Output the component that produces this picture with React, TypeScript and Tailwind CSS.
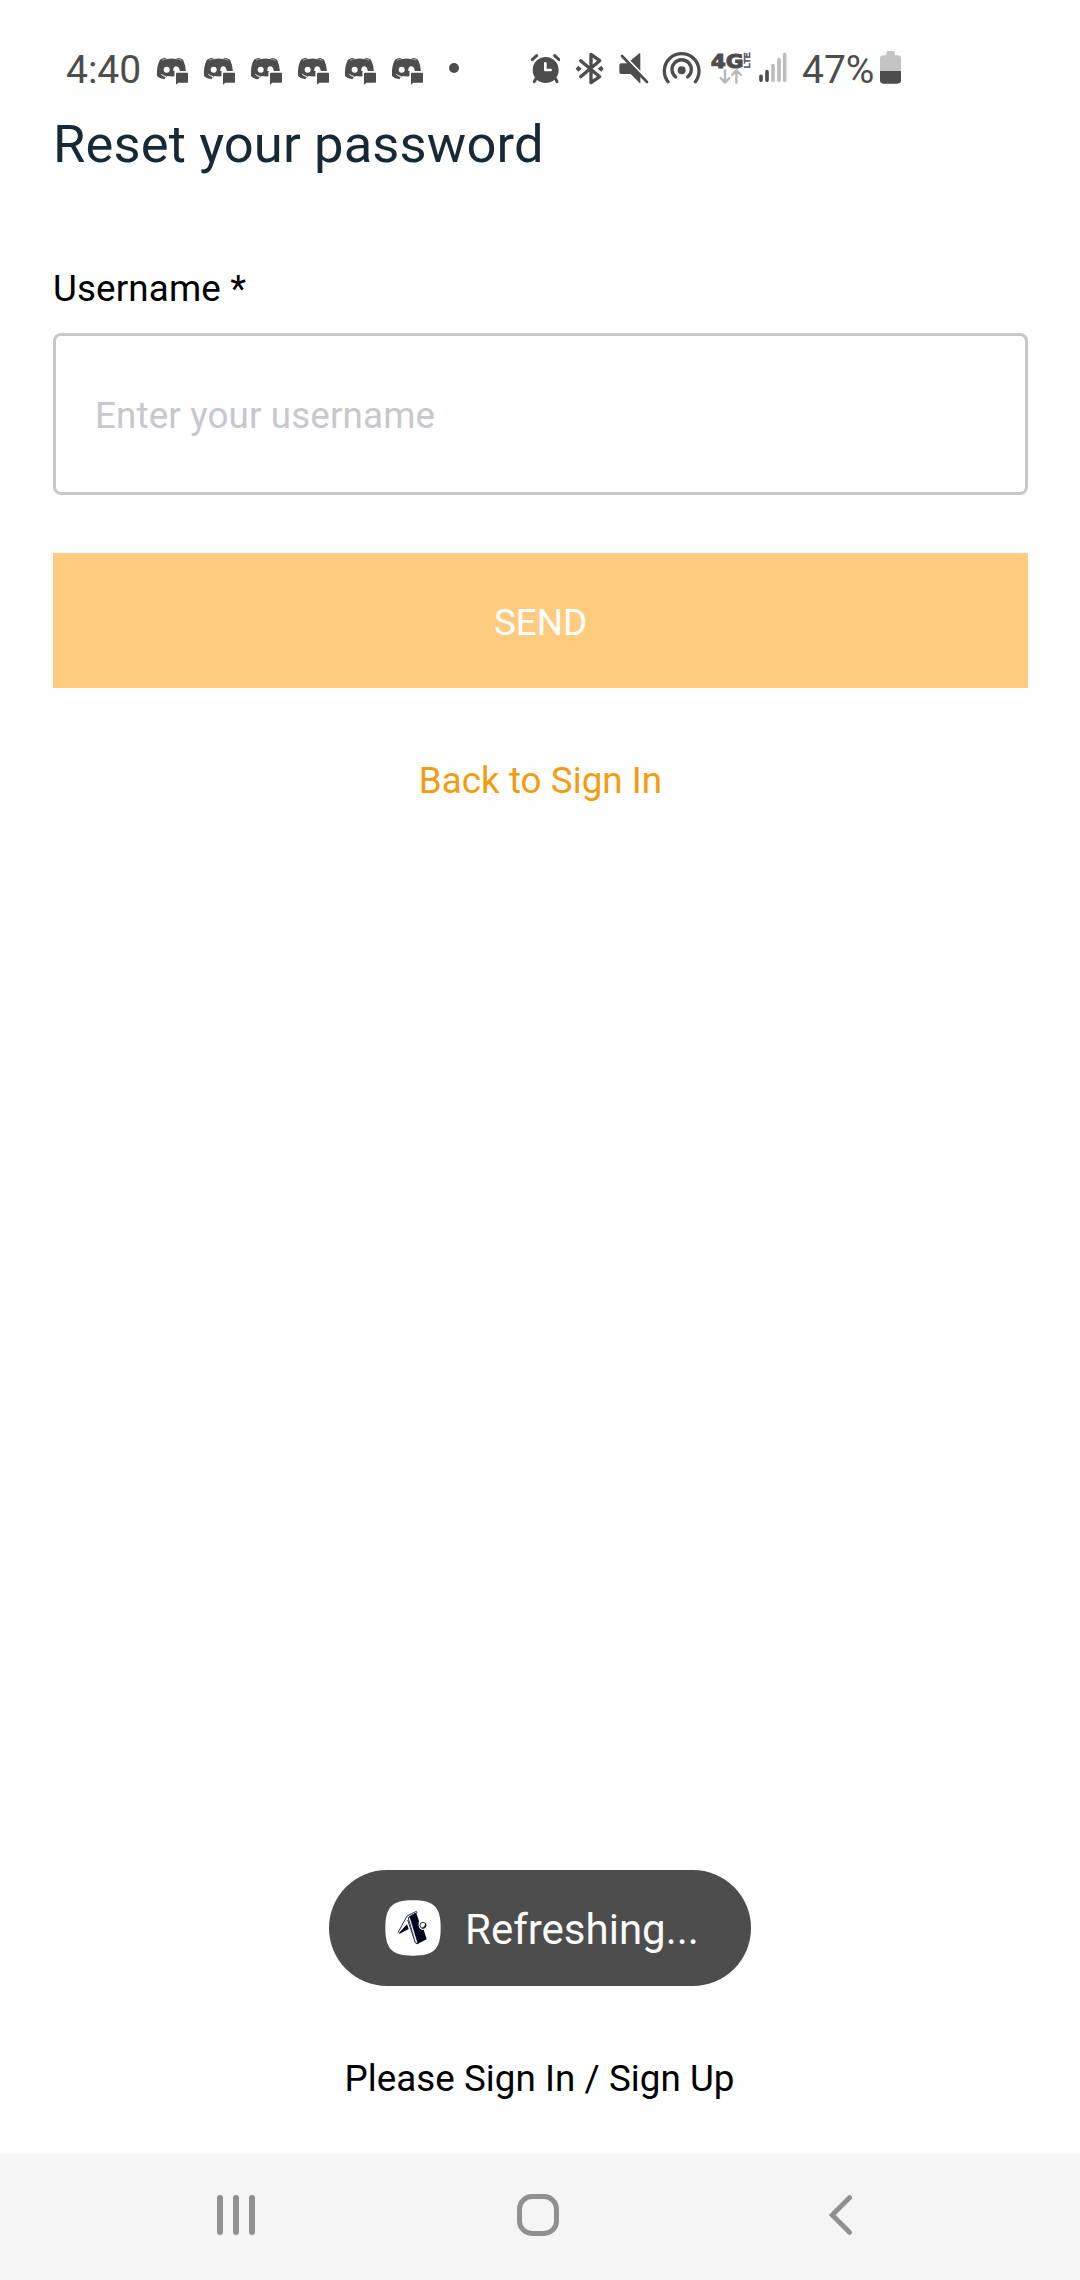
import React from "react";

const INK = "#4d4d4d";

// Status glyphs share a 40px tall box drawn on a grid of three units per pixel.
function Glyph({ x, w, className, children }: { x: number; w: number; className?: string; children: React.ReactNode }) {
  return (
    <svg className={className} width={w / 3} height={40} viewBox={`${x} 30 ${w} 120`} fill={INK} style={{ flexShrink: 0 }}>
      {children}
    </svg>
  );
}

function DiscordIcon() {
  return (
    <Glyph x={348} w={99}>
      <path d="M375 53 L382 57 Q395 54 407 57 L414 53 Q422 54 429 59 Q437 74 438 95 L404 95 L404 109 Q393 110 383 108 L378 112 Q365 106 364 102 Q368 108 377 112 L373 118 Q358 116 351 108 Q349 78 360 59 Q367 54 375 53Z" />
      <path d="M366 61 Q374 56 383 56 M406 56 Q415 56 424 61" fill="none" stroke="#fff" strokeWidth="1.5" />
      <path d="M364 103 Q369 108 379 110" fill="none" stroke="#fff" strokeWidth="3" />
      <circle cx="380" cy="89" r="9" fill="#fff" />
      <path d="M400 93 Q399 80 408 79 Q417 80 418 88 L420 94Z" fill="#fff" />
      <path d="M404 93 H447 V132 H404Z" fill="#fff" />
      <path d="M411 98 H442 Q444 98 444 100 V126 Q444 128 442 128 H415 L408 134 V101 Q408 98 411 98Z" />
    </Glyph>
  );
}

function AlarmIcon() {
  return (
    <Glyph x={60} w={90} className="ml-[70px]">
      <circle cx="107" cy="90" r="39" />
      <path d="M67 59 L80 47 M147 59 L134 47 M77 117 L73 125 M137 117 L141 125" stroke={INK} strokeWidth="9" strokeLinecap="round" />
      <path d="M106 70 V90 H122" fill="none" stroke="#fff" strokeWidth="8" strokeLinecap="round" strokeLinejoin="round" />
    </Glyph>
  );
}

function BluetoothIcon() {
  return (
    <Glyph x={195} w={90} className="ml-[15px]">
      <path d="M212 62 L269 110 L243 128 V43 L269 62 L212 110" fill="none" stroke={INK} strokeWidth="10" strokeLinecap="round" strokeLinejoin="round" />
      <path d="M197 86 L205 77 L215 86 L205 95Z M281 86 L274 77 L263 86 L274 95Z" />
    </Glyph>
  );
}

function MuteIcon() {
  return (
    <Glyph x={324} w={93} className="ml-[13px]">
      <path d="M333 70 H358 L391 104 V131 L362 102 H333 Q328 102 328 97 V75 Q328 70 333 70Z" />
      <path d="M388 40 Q391 38 391 42 V92 L361 62Z" />
      <path d="M340 45 L415 123" stroke="#fff" strokeWidth="6" />
      <path d="M336 48 L411 126" stroke={INK} strokeWidth="8" strokeLinecap="round" />
    </Glyph>
  );
}

function HotspotIcon() {
  return (
    <Glyph x={456} w={117} className="ml-[13px]">
      <circle cx="515" cy="91" r="12" />
      <g fill="none" stroke={INK} strokeWidth="10" strokeLinecap="round">
        <path d="M474 125 A52 52 0 1 1 556 125" />
        <path d="M497 111 A29 29 0 1 1 533 111" />
      </g>
    </Glyph>
  );
}

function LteIcon() {
  return (
    <Glyph x={33} w={123} className="ml-[10px]">
      <text x="32" y="83" fontFamily="DejaVu Sans" fontWeight="700" fontSize="59" stroke={INK} strokeWidth="3" textLength="99" lengthAdjust="spacingAndGlyphs">4G</text>
      <text transform="translate(151 85) rotate(-90)" fontFamily="Liberation Sans" fontWeight="700" fontSize="26" stroke={INK} strokeWidth="1" textLength="48" lengthAdjust="spacingAndGlyphs">LTE</text>
      <path d="M75 91 V127 M62 114 L75 128 L88 114 M109 128 V92 M96 105 L109 91 L123 105" fill="none" stroke="#b8b8b8" strokeWidth="7" strokeLinecap="round" strokeLinejoin="round" />
    </Glyph>
  );
}

function SignalIcon() {
  return (
    <Glyph x={174} w={90} className="ml-[6px]">
      <g strokeWidth="11" strokeLinecap="round">
        <path d="M183 109 V121 M201 95 V121" stroke={INK} />
        <path d="M219 77 V121 M237 59 V121 M254 44 V121" stroke="#bdbdbd" />
      </g>
    </Glyph>
  );
}

function BatteryIcon() {
  return (
    <Glyph x={537} w={69} className="ml-[5px]">
      <path d="M559 46 V40 Q559 33 565 33 H579 Q585 33 585 40 V46 H593 Q603 46 603 56 V94 H540 V56 Q540 46 550 46Z" fill="#c4c4c4" />
      <path d="M540 93 H603 V121 Q603 131 593 131 H550 Q540 131 540 121Z" />
    </Glyph>
  );
}

function StatusBar() {
  return (
    <header className="flex h-[114px] items-start pt-[50px] text-[39px] leading-[40px] text-[#4d4d4d]">
      <span className="ml-[66px] w-[90px] whitespace-nowrap">4:40</span>
      <div className="flex gap-[14px]">
        {Array.from({ length: 6 }, (_, i) => (
          <DiscordIcon key={i} />
        ))}
      </div>
      <Glyph x={504} w={36} className="ml-[24px]">
        <circle cx="522" cy="84" r="15" />
      </Glyph>
      <AlarmIcon />
      <BluetoothIcon />
      <MuteIcon />
      <HotspotIcon />
      <LteIcon />
      <SignalIcon />
      <span className="ml-[14px] w-[72px] whitespace-nowrap">47%</span>
      <BatteryIcon />
    </header>
  );
}

function ToastLogo() {
  return (
    <svg width="56" height="56" viewBox="0 0 168 168" className="shrink-0">
      <path d="M84 1 C147 1 167 21 167 84 C167 147 147 167 84 167 C21 167 1 147 1 84 C1 21 21 1 84 1Z" fill="#fff" />
      <path d="M73 49 L93 38 L102 62 Q98 77 107 87 L116 89 L125 118 L97 132Z" fill="#00001f" />
      <path d="M39 98 L66 48 L94 34 L96 38 L70 53 L97 132 L91 128 L68 60" fill="none" stroke="#00001f" strokeWidth="2.5" strokeLinejoin="round" />
      <path d="M70 54 L75 51 L99 131 L91 128Z" fill="#fff" stroke="#00001f" strokeWidth="2" />
      <path d="M39 98 L44 101 L71 87 L66 73 L52 88 L43 98Z" fill="#00001f" />
      <circle cx="114" cy="76" r="13" fill="#fff" />
      <circle cx="114" cy="76" r="9" fill="#fff" stroke="#00001f" strokeWidth="2.5" />
      <path d="M122 70 Q125 83 112 85 Q121 80 122 70Z" fill="#00001f" stroke="#00001f" />
    </svg>
  );
}

function NavBar() {
  return (
    <nav className="flex h-[126px] items-center bg-[#f5f5f5] pb-[4px]">
      <div className="ml-[217px] flex w-[38px] justify-between">
        <i className="h-[40px] w-[6px] rounded-full bg-[#909090]" />
        <i className="h-[40px] w-[6px] rounded-full bg-[#909090]" />
        <i className="h-[40px] w-[6px] rounded-full bg-[#909090]" />
      </div>
      <div className="ml-[262px] size-[42px] rounded-[15px] border-[5px] border-[#909090]" />
      <svg className="ml-[270px]" width="24" height="40" viewBox="0 0 24 40" fill="none" stroke="#909090" strokeWidth="5" strokeLinecap="round">
        <path d="M20.5 2.7 L3.2 20 L20.5 37.3" />
      </svg>
    </nav>
  );
}

export default function App() {
  return (
    <div className="flex h-[2280px] w-[1080px] flex-col bg-[#fefefe] font-['Roboto',sans-serif] text-[36.75px] leading-[44px] text-black">
      <StatusBar />
      <main className="flex flex-1 flex-col pr-[52px] pl-[53px]">
        <h1 className="text-[52.5px] leading-[60px] tracking-[0.14px] text-[#182936]">Reset your password</h1>
        <label htmlFor="username" className="mt-[93px] tracking-[0.15px]">Username *</label>
        <input
          id="username"
          placeholder="Enter your username"
          className="mt-[22px] h-[162px] rounded-[8px] border-[3px] border-[#c8c8c8] px-[39px] pt-[3px] tracking-[0.15px] placeholder:text-[#c7c7cd]"
        />
        <button className="mt-[58px] h-[135px] bg-[#ffcb7f] pt-[4px] text-white">SEND</button>
        <a className="mt-[71px] self-center tracking-[0.05px] text-[#f39c12]">Back to Sign In</a>
        <div className="mt-auto mr-[1px] flex h-[116px] w-[422px] items-center self-center rounded-full bg-[#4d4d4d] pl-[56px] text-[42px] leading-[50px] text-[#fafafa]">
          <ToastLogo />
          <span className="ml-[24px] pt-[3px] whitespace-nowrap">Refreshing...</span>
        </div>
        <p className="mt-[71px] mr-[2px] mb-[53px] text-center tracking-[0.05px]">Please Sign In / Sign Up</p>
      </main>
      <NavBar />
    </div>
  );
}
